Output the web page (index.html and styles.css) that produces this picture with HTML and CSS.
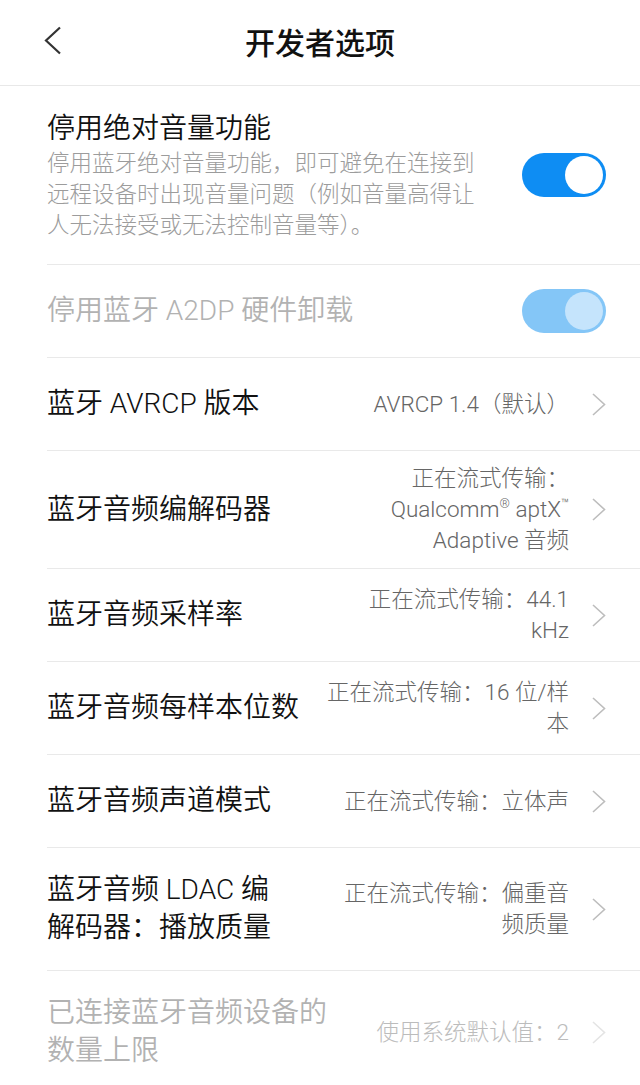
FILE: index.html
```html
<!DOCTYPE html>
<html lang="zh-CN">
<head>
  <meta charset="UTF-8">
  <title>开发者选项</title>
  <link rel="stylesheet" href="styles.css">
</head>
<body>

  <div class="header">
    <svg class="back" width="18" height="29" viewBox="0 0 18 29">
      <polyline points="16,1.5 2,14.5 16,27.5" fill="none" stroke="#333" stroke-width="2.2"/>
    </svg>
    <h1>开发者选项</h1>
  </div>

  <div class="list">

    <div class="item">
      <div class="text">
        <div class="title">停用绝对音量功能</div>
        <div class="summary">停用蓝牙绝对音量功能，即可避免在连接到远程设备时出现音量问题（例如音量高得让人无法接受或无法控制音量等）。</div>
      </div>
      <div class="switch on"><span class="knob"></span></div>
    </div>

    <div class="item disabled">
      <div class="text">
        <div class="title">停用蓝牙 A2DP 硬件卸载</div>
      </div>
      <div class="switch on"><span class="knob"></span></div>
    </div>

    <div class="item">
      <div class="text">
        <div class="title">蓝牙 AVRCP 版本</div>
      </div>
      <div class="value">AVRCP 1.4（默认）</div>
      <svg class="arrow" width="14" height="23" viewBox="0 0 14 23"><polyline points="1,1 12.5,11.5 1,22" /></svg>
    </div>

    <div class="item">
      <div class="text">
        <div class="title">蓝牙音频编解码器</div>
      </div>
      <div class="value">正在流式传输：<br>Qualcomm<sup>®</sup> aptX<sup>™</sup><br>Adaptive 音频</div>
      <svg class="arrow" width="14" height="23" viewBox="0 0 14 23"><polyline points="1,1 12.5,11.5 1,22" /></svg>
    </div>

    <div class="item">
      <div class="text">
        <div class="title">蓝牙音频采样率</div>
      </div>
      <div class="value">正在流式传输：44.1<br>kHz</div>
      <svg class="arrow" width="14" height="23" viewBox="0 0 14 23"><polyline points="1,1 12.5,11.5 1,22" /></svg>
    </div>

    <div class="item">
      <div class="text">
        <div class="title">蓝牙音频每样本位数</div>
      </div>
      <div class="value">正在流式传输：16 位/样<br>本</div>
      <svg class="arrow" width="14" height="23" viewBox="0 0 14 23"><polyline points="1,1 12.5,11.5 1,22" /></svg>
    </div>

    <div class="item">
      <div class="text">
        <div class="title">蓝牙音频声道模式</div>
      </div>
      <div class="value">正在流式传输：立体声</div>
      <svg class="arrow" width="14" height="23" viewBox="0 0 14 23"><polyline points="1,1 12.5,11.5 1,22" /></svg>
    </div>

    <div class="item">
      <div class="text">
        <div class="title">蓝牙音频 LDAC 编<br>解码器：播放质量</div>
      </div>
      <div class="value">正在流式传输：偏重音<br>频质量</div>
      <svg class="arrow" width="14" height="23" viewBox="0 0 14 23"><polyline points="1,1 12.5,11.5 1,22" /></svg>
    </div>

    <div class="item disabled">
      <div class="text">
        <div class="title">已连接蓝牙音频设备的<br>数量上限</div>
      </div>
      <div class="value">使用系统默认值：2</div>
      <svg class="arrow" width="14" height="23" viewBox="0 0 14 23"><polyline points="1,1 12.5,11.5 1,22" /></svg>
    </div>

  </div>

</body>
</html>
```

FILE: styles.css
```css
body {
  margin: 0;
  background: #fff;
  font-family: Roboto, "Noto Sans CJK SC", sans-serif;
  color: #111;
}
.header {
  height: 85px;
  border-bottom: 1px solid #e8e8e8;
  display: flex;
  align-items: center;
  justify-content: center;
  position: relative;
}
.header h1 {
  margin: 0 0 3px;
  font-size: 30px;
  font-weight: 500;
  color: #111;
}
.back {
  position: absolute;
  left: 44px;
  top: 26px;
}
.item {
  margin-left: 47px;
  padding: 12px 34px 12px 0;
  min-height: 93px;
  box-sizing: border-box;
  border-bottom: 1px solid #e9e9e9;
  display: flex;
  align-items: center;
}
.text {
  flex: 1;
  padding: 11px 0;
}
.title {
  font-size: 28px;
  line-height: 38px;
  font-weight: 350;
}
.item:first-child .text {
  padding-top: 12px;
}
.summary {
  font-size: 22.5px;
  line-height: 31px;
  font-weight: 300;
  color: #9c9c9c;
  margin-right: 40px;
}
.value {
  font-size: 22.5px;
  line-height: 31px;
  font-weight: 300;
  color: #666;
  text-align: right;
  margin-right: 23px;
}
.value sup {
  font-size: 13px;
  line-height: 0;
  vertical-align: 9px;
}
.arrow polyline {
  fill: none;
  stroke: #bdbdbd;
  stroke-width: 1.6;
}
.switch {
  width: 84px;
  height: 44px;
  box-sizing: border-box;
  padding: 3px;
  border-radius: 22px;
  background: #0e8df3;
  display: flex;
  justify-content: flex-end;
}
.knob {
  width: 38px;
  height: 38px;
  border-radius: 50%;
  background: #fff;
}
.disabled .title {
  color: #b2b2b2;
}
.disabled .value {
  color: #bcbcbc;
}
.disabled .arrow polyline {
  stroke: #e4e4e4;
}
.disabled .switch {
  background: #84c6f7;
}
.disabled .knob {
  background: #c5e4fc;
}
```
